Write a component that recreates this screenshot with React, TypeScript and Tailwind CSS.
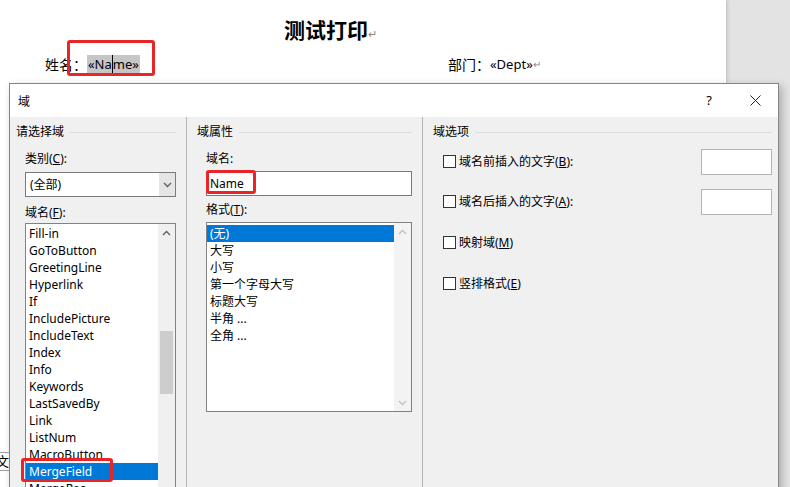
const fields = [
  "Fill-in",
  "GoToButton",
  "GreetingLine",
  "Hyperlink",
  "If",
  "IncludePicture",
  "IncludeText",
  "Index",
  "Info",
  "Keywords",
  "LastSavedBy",
  "Link",
  "ListNum",
  "MacroButton",
  "MergeField",
  "MergeRec",
]

const formats = ["(无)", "大写", "小写", "第一个字母大写", "标题大写", "半角 ...", "全角 ..."]

function Chevron({ up = false, color = "#606060" }: { up?: boolean; color?: string }) {
  return (
    <svg width="9" height="6" viewBox="0 0 9 6">
      <path
        d={up ? "M1 5 L4.5 1.5 L8 5" : "M1 1 L4.5 4.5 L8 1"}
        fill="none"
        stroke={color}
        strokeWidth="1.4"
      />
    </svg>
  )
}

function GroupLabel({ text }: { text: string }) {
  return (
    <div className="flex items-center h-[16px] leading-[16px]">
      <span>{text}</span>
      <div className="flex-1 h-px bg-[#dcdcdc] ml-[6px]" />
    </div>
  )
}

function Checkbox({ children }: { children: React.ReactNode }) {
  return (
    <div className="flex items-center">
      <div className="w-[13px] h-[13px] border border-[#333333] bg-white mr-[3px]" />
      <span className="leading-[16px]">{children}</span>
    </div>
  )
}

export default function App() {
  return (
    <div className="relative w-[790px] h-[487px] overflow-hidden bg-[#e3e3e3] font-['Noto_Sans','Noto_Sans_CJK_SC',sans-serif] text-[12px] text-black">
      {/* document page behind the dialog */}
      <div className="relative w-[726px] h-full bg-white shadow-[1px_0_4px_rgba(0,0,0,0.18)]">
        <div className="pt-[15px] pl-[284px] text-[21px] leading-[28px] font-bold font-['Noto_Sans_CJK_SC',sans-serif]">
          测试打印<span className="text-[11px] font-normal text-[#888]">↵</span>
        </div>
        <div className="flex items-center mt-[8px] pl-[45px] text-[14px] leading-[18px]">
          <div className="w-[403px] flex items-center">
            <span className="font-['Noto_Sans_CJK_SC',sans-serif]">姓名：</span>
            <span className="bg-[#c6c6c6] px-px text-[13px]">
              «Na<span className="border-l border-black" />me»
            </span>
          </div>
          <span className="font-['Noto_Sans_CJK_SC',sans-serif]">部门：</span>
          <span className="text-[13px]">«Dept»</span>
          <span className="text-[10px] text-[#888]">↵</span>
        </div>
        <div className="absolute left-[67px] top-[40px] w-[88px] h-[36px] border-[3px] border-[#e8262a] rounded-[3px]" />
        <div className="absolute left-[-4px] top-[452px] w-[14px] h-[19px] border-y border-[#a0a0a0] text-[13px] leading-[17px]">
          文
        </div>
      </div>

      {/* field dialog */}
      <div className="absolute left-[9px] top-[83px] w-[770px] h-[430px] border border-[#858585] bg-[#f0f0f0] shadow-[3px_3px_8px_rgba(0,0,0,0.25)] flex flex-col">
        <div className="h-[33px] bg-white flex items-center pl-[8px] shrink-0">
          <span className="font-['Noto_Sans_CJK_SC',sans-serif]">域</span>
          <div className="ml-auto flex">
            <div className="w-[46px] h-[33px] flex items-center justify-center text-[13px]">?</div>
            <div className="w-[46px] h-[33px] flex items-center justify-center">
              <svg width="11" height="11" viewBox="0 0 11 11">
                <path d="M0.5 0.5 L10.5 10.5 M10.5 0.5 L0.5 10.5" stroke="#222" strokeWidth="1" />
              </svg>
            </div>
          </div>
        </div>

        <div className="flex flex-1">
          {/* left column */}
          <div className="w-[176px] pt-[7px]">
            <div className="pl-[6px] pr-[10px]">
              <GroupLabel text="请选择域" />
            </div>
            <div className="pl-[15px] pr-[10px]">
              <div className="mt-[11px] leading-[16px]">
                类别(<u>C</u>):
              </div>
              <div className="mt-[5px] h-[25px] border border-[#7a7a7a] bg-white flex">
                <span className="flex-1 pl-[4px] leading-[23px]">(全部)</span>
                <div className="w-[16px] bg-[#e5e5e5] flex items-center justify-center">
                  <Chevron />
                </div>
              </div>
              <div className="mt-[8px] leading-[16px]">
                域名(<u>F</u>):
              </div>
              <div className="mt-[2px] h-[300px] border border-[#828282] bg-white flex">
                <div className="flex-1 pt-[1px]">
                  {fields.map((f) => (
                    <div
                      key={f}
                      className={
                        f === "MergeField"
                          ? "relative h-[17px] leading-[17px] pl-[3px] bg-[#0078d7] text-white"
                          : "h-[17px] leading-[17px] pl-[3px]"
                      }
                    >
                      {f}
                      {f === "MergeField" && (
                        <div className="absolute left-[-5px] top-[-5px] w-[92px] h-[24px] border-[3px] border-[#e8262a] rounded-[3px]" />
                      )}
                    </div>
                  ))}
                </div>
                <div className="w-[17px] bg-[#f0f0f0] flex flex-col">
                  <div className="h-[17px] flex items-center justify-center">
                    <Chevron up />
                  </div>
                  <div className="h-[90px]" />
                  <div className="h-[63px] mx-[2px] bg-[#cdcdcd]" />
                </div>
              </div>
            </div>
          </div>

          {/* middle column */}
          <div className="w-[236px] border-l border-[#b4b4b4] pt-[7px]">
            <div className="pl-[10px] pr-[10px]">
              <GroupLabel text="域属性" />
            </div>
            <div className="pl-[19px] pr-[10px]">
              <div className="mt-[11px] leading-[16px]">域名:</div>
              <div className="relative mt-[4px] h-[25px] border border-[#7a7a7a] bg-white pl-[3px] leading-[23px]">
                Name
                <div className="absolute left-[-1px] top-[-2px] w-[50px] h-[24px] border-[3px] border-[#e8262a] rounded-[3px]" />
              </div>
              <div className="mt-[6px] leading-[16px]">
                格式(<u>T</u>):
              </div>
              <div className="mt-[4px] h-[190px] border border-[#828282] bg-white flex">
                <div className="flex-1 pt-[2px]">
                  {formats.map((f, i) => (
                    <div
                      key={f}
                      className={
                        i === 0
                          ? "h-[17px] leading-[17px] pl-[3px] bg-[#0078d7] text-white"
                          : "h-[17px] leading-[17px] pl-[3px]"
                      }
                    >
                      {f}
                    </div>
                  ))}
                </div>
                <div className="w-[17px] bg-[#f3f3f3] flex flex-col justify-between">
                  <div className="h-[17px] flex items-center justify-center">
                    <Chevron up color="#c2c2c2" />
                  </div>
                  <div className="h-[17px] flex items-center justify-center">
                    <Chevron color="#c2c2c2" />
                  </div>
                </div>
              </div>
            </div>
          </div>

          {/* right column */}
          <div className="flex-1 border-l border-[#b4b4b4] pt-[7px]">
            <div className="pl-[10px] pr-[6px]">
              <GroupLabel text="域选项" />
            </div>
            <div className="pl-[20px] pr-[6px]">
              <div className="mt-[9px] h-[25px] flex items-center">
                <Checkbox>
                  域名前插入的文字(<u>B</u>):
                </Checkbox>
                <div className="ml-auto w-[71px] h-[26px] border border-[#b4b4b4] bg-white" />
              </div>
              <div className="mt-[15px] h-[25px] flex items-center">
                <Checkbox>
                  域名后插入的文字(<u>A</u>):
                </Checkbox>
                <div className="ml-auto w-[71px] h-[26px] border border-[#b4b4b4] bg-white" />
              </div>
              <div className="mt-[16px] h-[25px] flex items-center">
                <Checkbox>
                  映射域(<u>M</u>)
                </Checkbox>
              </div>
              <div className="mt-[16px] h-[25px] flex items-center">
                <Checkbox>
                  竖排格式(<u>E</u>)
                </Checkbox>
              </div>
            </div>
          </div>
        </div>
      </div>
    </div>
  )
}
